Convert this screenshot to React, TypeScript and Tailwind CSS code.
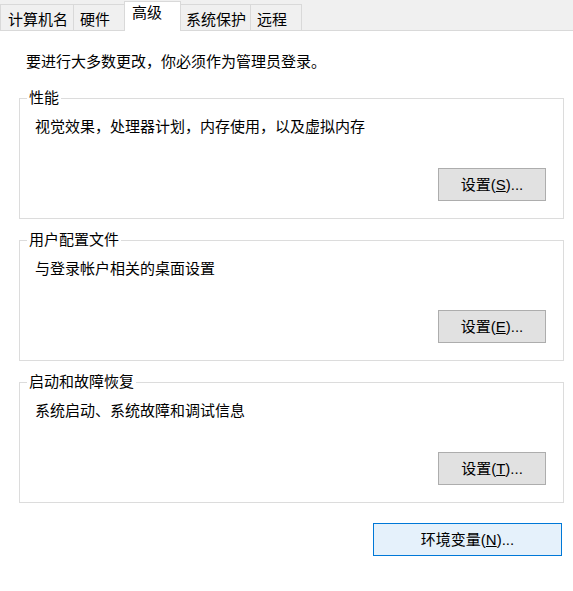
import React from 'react'

const font = { fontFamily: '"Liberation Sans", "Noto Sans CJK SC", sans-serif' }

function Tab({ label, width, pad, active }: { label: string; width: string; pad: string; active?: boolean }) {
  if (active) {
    return (
      <div className={`${width} ${pad} h-[30px] -mb-px bg-white border border-b-0 border-[#d9d9d9] pt-[5px] leading-[20px]`}>
        {label}
      </div>
    )
  }
  return (
    <div className={`${width} ${pad} h-[26px] bg-[#f0f0f0] border border-b-0 border-[#d9d9d9] -ml-px first:ml-0 pt-[5px] leading-[20px]`}>
      {label}
    </div>
  )
}

function SetButton({ label, mnemonic }: { label: string; mnemonic: string }) {
  return (
    <button className="w-[108px] h-[33px] bg-[#e1e1e1] border border-[#adadad] text-[15px] leading-[20px] text-black">
      {label}(<span className="underline">{mnemonic}</span>)...
    </button>
  )
}

function Group({ title, text, mnemonic }: { title: string; text: string; mnemonic: string }) {
  return (
    <div className="relative w-[545px] h-[121px] border border-[#dcdcdc]">
      <span className="absolute -top-[11px] left-[7px] px-[2px] bg-white leading-[20px]">{title}</span>
      <div className="pt-[18px] pl-[15px] leading-[20px]">{text}</div>
      <div className="flex justify-end pr-[17px] mt-[31px]">
        <SetButton label="设置" mnemonic={mnemonic} />
      </div>
    </div>
  )
}

export default function App() {
  return (
    <div className="w-[573px] h-[591px] bg-white text-[15px] text-black overflow-hidden" style={font}>
      <div className="h-[31px] bg-[#f0f0f0] border-b border-[#d9d9d9] flex items-end">
        <Tab label="计算机名" width="w-[74px]" pad="pl-[7px]" />
        <Tab label="硬件" width="w-[52px]" pad="pl-[6px]" />
        <div className="w-[57px] pl-[7px] h-[30px] -mb-px -ml-px bg-white border border-b-0 border-[#d9d9d9] pt-[1px] leading-[20px] z-10">
          高级
        </div>
        <Tab label="系统保护" width="w-[71px]" pad="pl-[5px]" />
        <Tab label="远程" width="w-[52px]" pad="pl-[6px]" />
      </div>
      <div className="pl-[19px] pt-[21px]">
        <div className="pl-[7px] leading-[20px]">要进行大多数更改，你必须作为管理员登录。</div>
        <div className="mt-[26px] flex flex-col gap-[21px]">
          <Group title="性能" text="视觉效果，处理器计划，内存使用，以及虚拟内存" mnemonic="S" />
          <Group title="用户配置文件" text="与登录帐户相关的桌面设置" mnemonic="E" />
          <Group title="启动和故障恢复" text="系统启动、系统故障和调试信息" mnemonic="T" />
        </div>
        <div className="mt-[20px] pl-[354px]">
          <button className="w-[189px] h-[33px] bg-[#e5f1fb] border border-[#0078d7] text-[15px] leading-[20px] text-black">
            环境变量(<span className="underline">N</span>)...
          </button>
        </div>
      </div>
    </div>
  )
}
